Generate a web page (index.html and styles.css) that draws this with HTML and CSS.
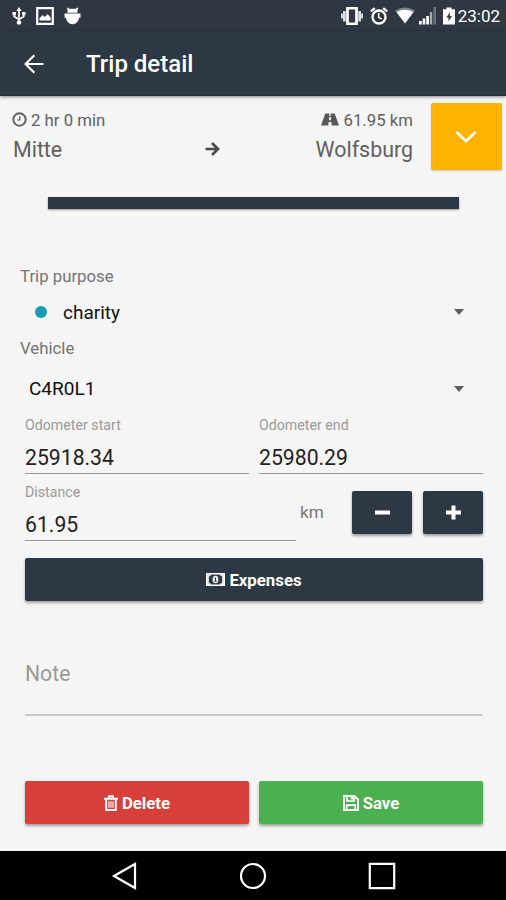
FILE: index.html
```
<!DOCTYPE html>
<html lang="en">
<head>
    <meta charset="UTF-8">
    <meta name="viewport" content="width=device-width, initial-scale=1.0">
    <title>Trip detail</title>
    <link rel="stylesheet" href="styles.css">
</head>
<body>
    <div class="status-bar">
        <div class="status-left">
            <svg width="14" height="18" viewBox="0 0 14 18" fill="none" stroke="#fff" stroke-width="1.7">
                <path d="M7 3v12M2.3 7v2.500L7 12.500l4.700-3V7"/>
                <path d="M7 0l2.700 4H4.300zM.5 5h3.500v3.300H.5zM10 5h3.500v3.300H10z" fill="#fff" stroke="none"/>
                <circle cx="7" cy="15.500" r="2.300" fill="#fff" stroke="none"/>
            </svg>
            <svg width="18" height="18" viewBox="0 0 18 18">
                <path d="M1.200 1.200h15.600v15.600H1.200z" fill="none" stroke="#fff" stroke-width="2.200"/>
                <path d="M3.500 13.500v-2.200l3-3.300 2.300 2 2.800-3 3 3.500v3z" fill="#fff"/>
            </svg>
            <svg width="17" height="18" viewBox="0 0 17 18" fill="#fff">
                <path d="M3.500 5.800V2.800L2.800 1l1-.6 1.200 1.400h7L13.200.4l1 .6-.7 1.800v3zM.5 6.600h16v4.200h-1.400c-.8 4-3.200 6.400-6.600 6.400s-5.800-2.400-6.600-6.400H.5z"/>
            </svg>
        </div>
        <div class="status-right">
            <svg class="vibrate" width="22" height="18" viewBox="0 0 22 18">
                <path d="M6.500 1.200h9v15.600h-9z" fill="none" stroke="#fff" stroke-width="2.700"/>
                <path d="M2 4h2.800v10.500H2zM17.200 4H20v10.500h-2.800zM0 6.500h2v5H0zM20 6.500h2v5h-2z" fill="#d5d7da"/>
            </svg>
            <svg class="alarm" width="18" height="18" viewBox="0 0 18 18" fill="none" stroke="#fff" stroke-width="2.300">
                <circle cx="9" cy="10" r="6.500"/>
                <path d="M.8 4.400l4-3.300M17.200 4.400l-4-3.300"/>
                <path d="M8.700 6v4.300l3 1.800" stroke-width="1.500"/>
            </svg>
            <svg class="wifi" width="20" height="17" viewBox="0 0 20 17">
                <path d="M0 3.500Q10-2.500 20 3.500L10 16.500z" fill="#77808a"/>
                <path d="M1.500 5Q10 .5 18.500 5L10 16.500z" fill="#fff"/>
            </svg>
            <svg class="signal" width="18" height="18" viewBox="0 0 18 18">
                <path d="M0 14h2.700v3.500H0zM3.600 11.500h2.700v6H3.600zM7.200 9h2.700v8.500H7.200z" fill="#fff"/>
                <path d="M10.800 5h2.400v12.500h-2.400z" fill="#a5abb1"/>
                <path d="M14.400 0h2.600v17.500h-2.600z" fill="#6b747d"/>
            </svg>
            <svg class="battery" width="12" height="18" viewBox="0 0 12 18">
                <path d="M0 2.200h3.500V.5h5v1.700H12v15.300H0z" fill="#fff"/>
                <path d="M7 5.200L3.300 10.500h2.200v4l3.400-5.600H6.800z" fill="#2d3845"/>
            </svg>
            <span class="clock">23:02</span>
        </div>
    </div>

    <header class="app-bar">
        <svg width="20" height="20" viewBox="0 0 20 20" fill="none" stroke="#fff" stroke-width="2.200">
            <path d="M19.500 10H2M10.300 1.300L1.600 10l8.700 8.700"/>
        </svg>
        <h1>Trip detail</h1>
    </header>

    <main>
        <section class="summary">
            <div class="route">
                <div class="route-meta">
                    <span>
                        <svg width="15" height="15" viewBox="0 0 15 15" fill="none" stroke="#606060">
                            <circle cx="7.500" cy="7.500" r="6.200" stroke-width="2"/>
                            <path d="M7.800 4v4H5" stroke-width="1.200"/>
                        </svg>
                        2 hr 0 min
                    </span>
                    <span>
                        <svg class="road" width="18" height="13" viewBox="0 0 18 13" fill="#585858">
                            <path d="M4.300.5h4L8.200 3h1.600L9.700.5h4L18 12.500h-7.300L10.400 9H7.600l-.3 3.500H0z"/>
                            <path d="M8.100 4h1.800l.2 3.200H7.900z" fill="#f5f5f5"/>
                        </svg>
                        61.95 km
                    </span>
                </div>
                <div class="route-places">
                    <span>Mitte</span>
                    <svg width="15" height="14" viewBox="0 0 15 14" fill="none" stroke="#4c4c4c" stroke-width="2.700">
                        <path d="M.5 7h12M7 1l6 6-6 6"/>
                    </svg>
                    <span class="to">Wolfsburg</span>
                </div>
            </div>
            <button class="btn btn-expand" type="button" aria-label="Expand">
                <svg width="22" height="14" viewBox="0 0 22 14" fill="none" stroke="#fff" stroke-width="2.700">
                    <path d="M1.500 2L11 11.200 20.500 2"/>
                </svg>
            </button>
        </section>

        <div class="progress"></div>

        <form class="trip-form">
            <div class="select-label">Trip purpose</div>
            <div class="select select-purpose">
                <span class="dot"></span>
                <span>charity</span>
                <span class="caret"></span>
            </div>
            <div class="select-label">Vehicle</div>
            <div class="select select-vehicle">
                <span>C4R0L1</span>
                <span class="caret"></span>
            </div>

            <div class="row odometer">
                <div class="field">
                    <label for="odo-start">Odometer start</label>
                    <input type="text" id="odo-start" value="25918.34">
                </div>
                <div class="field">
                    <label for="odo-end">Odometer end</label>
                    <input type="text" id="odo-end" value="25980.29">
                </div>
            </div>

            <div class="row distance">
                <div class="field">
                    <label for="distance">Distance</label>
                    <input type="text" id="distance" value="61.95">
                </div>
                <span class="unit">km</span>
                <button class="btn btn-step" type="button" aria-label="Decrease">
                    <svg width="15" height="15" viewBox="0 0 15 15"><path d="M0 5.500h15v4H0z" fill="#fff"/></svg>
                </button>
                <button class="btn btn-step" type="button" aria-label="Increase">
                    <svg width="15" height="15" viewBox="0 0 15 15"><path d="M5.500.5h4v5H15v4H9.500v5h-4v-5H0v-4h5.500z" fill="#fff"/></svg>
                </button>
            </div>

            <button class="btn btn-expenses" type="button">
                <svg width="19" height="13" viewBox="0 0 19 13">
                    <path d="M.8.8h17.400v11.400H.8z" fill="none" stroke="#fff" stroke-width="1.600"/>
                    <path d="M1 1h4.500Q5 3 3 3.500v6Q5 10 5.500 12H1zM18 1h-4.500Q14 3 16 3.500v6q-2 .5-2.500 2.500H18z" fill="#fff" opacity=".8"/>
                    <ellipse cx="9.500" cy="6.500" rx="2.900" ry="3.800" fill="#fff"/>
                    <path d="M8.400 4.500h1.600v3.200h.8v1H8.300v-1H9V5.500h-.6z" fill="#2d3845"/>
                </svg>
                Expenses
            </button>

            <input class="note" type="text" placeholder="Note">

            <div class="row actions">
                <button class="btn btn-delete" type="button">
                    <svg width="14" height="16" viewBox="0 0 14 16" fill="none" stroke="#fff">
                        <path d="M0 3.700h14M4.300 3.500l.8-2.300h3.800l.8 2.300" stroke-width="1.900"/>
                        <path d="M2.200 4v11h9.600V4" stroke-width="1.900"/>
                        <path d="M5 6.200v6.500M7 6.200v6.500M9 6.200v6.500" stroke-width="1.100"/>
                    </svg>
                    Delete
                </button>
                <button class="btn btn-save" type="button">
                    <svg width="16" height="16" viewBox="0 0 16 16" fill="none" stroke="#fff" stroke-width="1.900">
                        <path d="M1 1h10.500L15 4.500V15H1z"/>
                        <path d="M4 1v5h7V1M3.800 15v-4.800h8.400V15" stroke-width="1.700"/>
                        <path d="M7.700 1h2.300v3.500H7.700z" fill="#fff" stroke="none"/>
                    </svg>
                    Save
                </button>
            </div>
        </form>
    </main>

    <nav class="nav-bar">
        <svg width="28" height="28" viewBox="0 0 28 28"><path d="M4 14l21-12v24z"/></svg>
        <svg width="28" height="28" viewBox="0 0 28 28"><circle cx="14" cy="14" r="12"/></svg>
        <svg width="28" height="28" viewBox="0 0 28 28"><path d="M1.800 1.800h24.400v24.400H1.800z"/></svg>
    </nav>
</body>
</html>
```

FILE: styles.css
```
* {
    margin: 0;
    padding: 0;
    box-sizing: border-box;
}
body {
    font-family: Roboto, sans-serif;
    background: #f5f5f5;
    height: 900px;
    display: flex;
    flex-direction: column;
    overflow: hidden;
}
svg {
    display: block;
    flex: none;
}
.status-bar {
    height: 31px;
    padding: 0 6px 0 12px;
    background: #303742;
    display: flex;
    align-items: center;
    justify-content: space-between;
    color: #fff;
}
.status-left, .status-right {
    display: flex;
    align-items: center;
}
.status-left {
    gap: 10px;
}
.alarm {
    margin-left: 7px;
}
.wifi {
    margin-left: 7px;
}
.signal {
    margin-left: 4px;
}
.battery {
    margin: 0 3px 0 6px;
}
.clock {
    font-size: 17px;
    line-height: 20px;
}
.app-bar {
    position: relative;
    height: 65px;
    padding: 1px 24px 0;
    background: #2d3845;
    border-bottom: 1px solid #20303f;
    box-shadow: 0 1px 3px rgba(0, 0, 0, 0.45);
    display: flex;
    align-items: center;
    gap: 42px;
    color: #fff;
}
h1 {
    font-size: 24px;
    font-weight: 500;
}
main {
    flex: 1;
}
.summary {
    height: 79px;
    padding: 7px 4px 5px 12px;
    display: flex;
    justify-content: space-between;
}
.route {
    width: 401px;
    color: #606060;
}
.route-meta, .route-places {
    display: flex;
    justify-content: space-between;
    align-items: center;
}
.route-meta {
    height: 33px;
    font-size: 16.8px;
}
.route-meta span {
    display: flex;
    align-items: center;
    gap: 4px;
}
.route-places {
    height: 26px;
    font-size: 21.4px;
}
.route-places span {
    width: 150px;
    padding-left: 1px;
}
.route-places .to {
    text-align: right;
}
.btn {
    border: none;
    border-radius: 2px;
    background: #2d3845;
    color: #fff;
    font-family: inherit;
    font-size: 16.8px;
    font-weight: 700;
    display: flex;
    align-items: center;
    justify-content: center;
    gap: 4px;
    box-shadow: 0 2px 3px rgba(0, 0, 0, 0.35);
}
.btn-expand {
    width: 71px;
    height: 67px;
    background: #ffb300;
    box-shadow: 0 1px 2px rgba(0, 0, 0, 0.2);
}
.btn-expand svg {
    margin-right: 2px;
}
.progress {
    width: 411px;
    height: 12px;
    margin: 22px 0 0 48px;
    background: #2d3845;
    box-shadow: 0 1px 2px rgba(0, 0, 0, 0.4);
}
.trip-form {
    padding: 57px 23px 0 25px;
}
.select-label {
    height: 20px;
    margin-left: -5px;
    line-height: 20px;
    font-size: 16.8px;
    color: #747474;
}
.select {
    display: flex;
    align-items: center;
    font-size: 19px;
    color: #111;
}
.select-purpose {
    height: 52px;
    padding: 0 19px 0 10px;
    gap: 16px;
}
.select-vehicle {
    height: 58px;
    padding: 3px 19px 0 4px;
}
.dot {
    width: 12px;
    height: 12px;
    border-radius: 50%;
    background: #199bb5;
}
.caret {
    margin-left: auto;
    border: 5px solid transparent;
    border-top: 6px solid #5c5c5c;
    border-bottom: none;
}
.row {
    display: flex;
}
.odometer, .actions {
    gap: 10px;
}
.field {
    flex: 1;
    min-width: 0;
}
.field label {
    display: block;
    height: 18px;
    line-height: 18px;
    font-size: 14.2px;
    color: #9a9a9a;
}
.field input, .note {
    display: block;
    width: 100%;
    border: none;
    border-bottom: 1px solid #999;
    background: transparent;
    font-family: inherit;
    font-size: 21.2px;
    color: #222;
    outline: none;
}
.field input {
    height: 40px;
    padding-top: 7px;
}
.odometer {
    height: 67px;
}
.distance {
    height: 75px;
}
.distance .field {
    flex: none;
    width: 271px;
}
.unit {
    width: 56px;
    padding: 19px 0 0 4px;
    font-size: 17.2px;
    color: #777;
}
.btn-step {
    width: 60px;
    height: 43px;
    margin-top: 8px;
}
.btn-step + .btn-step {
    margin-left: 11px;
}
.btn-expenses {
    width: 100%;
    height: 43px;
}
.note {
    height: 84px;
    margin-top: 31px;
    border-bottom-width: 2px;
    border-bottom-color: #c8c8c8;
}
.note::placeholder {
    color: #999;
}
.actions {
    margin-top: 65px;
}
.btn-delete, .btn-save {
    flex: 1;
    height: 43px;
}
.btn-delete {
    background: #d63f3a;
}
.btn-save {
    background: #4caf50;
}
.nav-bar {
    height: 49px;
    background: #000;
    display: flex;
    align-items: center;
    justify-content: center;
    gap: 101px;
}
.nav-bar svg {
    fill: none;
    stroke: #fff;
    stroke-width: 2.2;
}
```
